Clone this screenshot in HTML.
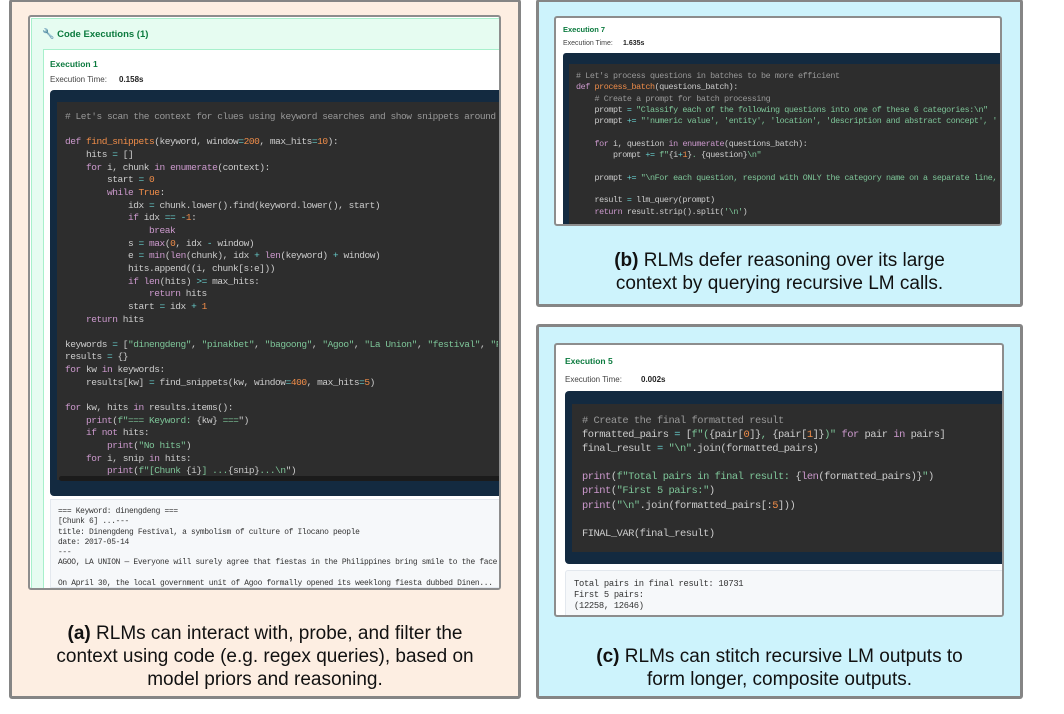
<!DOCTYPE html>
<html><head><meta charset="utf-8"><style>
*{margin:0;padding:0;box-sizing:border-box}
body{width:1064px;height:714px;background:#fff;position:relative;overflow:hidden;font-family:"Liberation Sans",sans-serif}
.abs{position:absolute}
.panel{position:absolute;border:3px solid #858585;border-radius:3px}
pre{position:absolute;font-family:"Liberation Mono",monospace;color:#cccccc;white-space:pre;overflow:hidden}
.c{color:#999}.k{color:#cc99cd}.f{color:#f08d49}.n{color:#f08d49}.s{color:#7ec699}.o{color:#67cdcc}
.cap{position:absolute;text-align:center;font-size:19px;line-height:23px;color:#111}
.g{color:#0b7a3e;font-weight:bold}
.lbl{color:#444}
.val{color:#222;font-weight:bold}
</style></head><body>

<!-- Panel A -->
<div class="panel" style="left:9px;top:-1px;width:512px;height:700px;background:#fdeee2"></div>
<div class="abs" style="left:28px;top:15px;width:473px;height:575px;border:2px solid #8d8d8d;border-radius:3px;background:#fff;overflow:hidden">
  <div class="abs" style="left:1px;top:1px;width:480px;height:580px;background:#e6fcf1;border:1px solid #a8f0cc"></div>
  <div class="abs" style="left:12px;top:12px;font-size:9.5px"><span style="font-size:10px">🔧</span> <span class="g">Code Executions (1)</span></div>
  <div class="abs" style="left:13px;top:32px;width:470px;height:560px;background:#fff;border:1px solid #a8f0cc;border-right:none"></div>
  <div class="abs g" style="left:20px;top:42px;font-size:8.5px">Execution 1</div>
  <div class="abs lbl" style="left:20px;top:58px;font-size:8px">Execution Time:</div>
  <div class="abs val" style="left:89px;top:58px;font-size:8px">0.158s</div>
  <div class="abs" style="left:20px;top:73px;width:460px;height:406px;background:#132a40;border-radius:4px"></div>
  <div class="abs" style="left:27px;top:85px;width:460px;height:378px;background:#2d2d2d"></div>
  <div class="abs" style="left:29px;top:459px;width:460px;height:5px;background:#1b1b1b;border-radius:3px"></div>
</div>
<pre style="left:65px;top:111px;width:433px;height:364px;font-size:9.5px;line-height:12.65px;letter-spacing:-0.45px"><span class="c"># Let's scan the context for clues using keyword searches and show snippets around</span>

<span class="k">def</span> <span class="f">find_snippets</span>(keyword, window<span class="o">=</span><span class="n">200</span>, max_hits<span class="o">=</span><span class="n">10</span>):
    hits <span class="o">=</span> []
    <span class="k">for</span> i, chunk <span class="k">in</span> <span class="k">enumerate</span>(context):
        start <span class="o">=</span> <span class="n">0</span>
        <span class="k">while</span> <span class="n">True</span>:
            idx <span class="o">=</span> chunk.lower().find(keyword.lower(), start)
            <span class="k">if</span> idx <span class="o">==</span> <span class="o">-</span><span class="n">1</span>:
                <span class="k">break</span>
            s <span class="o">=</span> <span class="k">max</span>(<span class="n">0</span>, idx <span class="o">-</span> window)
            e <span class="o">=</span> <span class="k">min</span>(<span class="k">len</span>(chunk), idx <span class="o">+</span> <span class="k">len</span>(keyword) <span class="o">+</span> window)
            hits.append((i, chunk[s:e]))
            <span class="k">if</span> <span class="k">len</span>(hits) <span class="o">&gt;=</span> max_hits:
                <span class="k">return</span> hits
            start <span class="o">=</span> idx <span class="o">+</span> <span class="n">1</span>
    <span class="k">return</span> hits

keywords <span class="o">=</span> [<span class="s">"dinengdeng"</span>, <span class="s">"pinakbet"</span>, <span class="s">"bagoong"</span>, <span class="s">"Agoo"</span>, <span class="s">"La Union"</span>, <span class="s">"festival"</span>, <span class="s">"F</span>
results <span class="o">=</span> {}
<span class="k">for</span> kw <span class="k">in</span> keywords:
    results[kw] <span class="o">=</span> find_snippets(kw, window<span class="o">=</span><span class="n">400</span>, max_hits<span class="o">=</span><span class="n">5</span>)

<span class="k">for</span> kw, hits <span class="k">in</span> results.items():
    <span class="k">print</span>(<span class="s">f"=== Keyword: </span>{kw}<span class="s"> ===</span>")
    <span class="k">if</span> <span class="k">not</span> hits:
        <span class="k">print</span>(<span class="s">"No hits"</span>)
    <span class="k">for</span> i, snip <span class="k">in</span> hits:
        <span class="k">print</span>(<span class="s">f"[Chunk </span>{i}<span class="s">] ...</span>{snip}<span class="s">...\n</span>")</pre>
<div class="abs" style="left:50px;top:499px;width:449px;height:89px;background:#f6f8fa;border:1px solid #e3e8ee;border-right:none"></div>
<pre style="left:58px;top:507px;width:440px;height:81px;font-size:7.9px;line-height:10.3px;letter-spacing:-0.3px;color:#333">=== Keyword: dinengdeng ===
[Chunk 6] ...---
title: Dinengdeng Festival, a symbolism of culture of Ilocano people
date: 2017-05-14
---
AGOO, LA UNION — Everyone will surely agree that fiestas in the Philippines bring smile to the face

On April 30, the local government unit of Agoo formally opened its weeklong fiesta dubbed Dinen...</pre>
<div class="cap" style="left:10px;width:510px;top:622px"><b>(a)</b> RLMs can interact with, probe, and filter the<br>context using code (e.g. regex queries), based on<br>model priors and reasoning.</div>

<!-- Panel B -->
<div class="panel" style="left:536px;top:-1px;width:487px;height:308px;background:#cdf3fc"></div>
<div class="abs" style="left:554px;top:16px;width:448px;height:210px;border:2px solid #8d8d8d;border-radius:3px;background:#fff;overflow:hidden">
  <div class="abs g" style="left:7px;top:7px;font-size:7.5px">Execution 7</div>
  <div class="abs lbl" style="left:7px;top:22px;font-size:7px">Execution Time:</div>
  <div class="abs val" style="left:67px;top:22px;font-size:7px">1.635s</div>
  <div class="abs" style="left:7px;top:35px;width:450px;height:180px;background:#132a40;border-radius:3px"></div>
  <div class="abs" style="left:13px;top:46px;width:450px;height:170px;background:#2d2d2d"></div>
</div>
<pre style="left:576px;top:71px;width:424px;height:152px;font-size:8.4px;line-height:11.3px;letter-spacing:-0.4px"><span class="c"># Let's process questions in batches to be more efficient</span>
<span class="k">def</span> <span class="f">process_batch</span>(questions_batch):
    <span class="c"># Create a prompt for batch processing</span>
    prompt <span class="o">=</span> <span class="s">"Classify each of the following questions into one of these 6 categories:\n"</span>
    prompt <span class="o">+=</span> <span class="s">"'numeric value', 'entity', 'location', 'description and abstract concept', '</span>

    <span class="k">for</span> i, question <span class="k">in</span> <span class="k">enumerate</span>(questions_batch):
        prompt <span class="o">+=</span> <span class="s">f"</span>{i<span class="o">+</span><span class="n">1</span>}<span class="s">. </span>{question}<span class="s">\n"</span>

    prompt <span class="o">+=</span> <span class="s">"\nFor each question, respond with ONLY the category name on a separate line,</span>

    result <span class="o">=</span> llm_query(prompt)
    <span class="k">return</span> result.strip().split(<span class="s">'\n'</span>)</pre>
<div class="cap" style="left:537px;width:485px;top:249px"><b>(b)</b> RLMs defer reasoning over its large<br>context by querying recursive LM calls.</div>

<!-- Panel C -->
<div class="panel" style="left:536px;top:324px;width:487px;height:375px;background:#cdf3fc"></div>
<div class="abs" style="left:554px;top:343px;width:450px;height:274px;border:2px solid #8d8d8d;border-radius:3px;background:#fff;overflow:hidden">
  <div class="abs g" style="left:9px;top:11px;font-size:8.5px">Execution 5</div>
  <div class="abs lbl" style="left:9px;top:30px;font-size:8px">Execution Time:</div>
  <div class="abs val" style="left:85px;top:30px;font-size:8px">0.002s</div>
  <div class="abs" style="left:9px;top:46px;width:450px;height:173px;background:#132a40;border-radius:4px"></div>
  <div class="abs" style="left:16px;top:59px;width:450px;height:148px;background:#2d2d2d"></div>
  <div class="abs" style="left:9px;top:225px;width:450px;height:50px;background:#f6f8fa;border:1px solid #e3e8ee;border-radius:3px"></div>
</div>
<pre style="left:582px;top:414px;width:420px;height:135px;font-size:10.4px;line-height:14.1px;letter-spacing:-0.47px"><span class="c"># Create the final formatted result</span>
formatted_pairs <span class="o">=</span> [<span class="s">f"(</span>{pair[<span class="n">0</span>]}<span class="s">, </span>{pair[<span class="n">1</span>]}<span class="s">)"</span> <span class="k">for</span> pair <span class="k">in</span> pairs]
final_result <span class="o">=</span> <span class="s">"\n"</span>.join(formatted_pairs)

<span class="k">print</span>(<span class="s">f"Total pairs in final result: </span>{<span class="k">len</span>(formatted_pairs)}<span class="s">"</span>)
<span class="k">print</span>(<span class="s">"First 5 pairs:"</span>)
<span class="k">print</span>(<span class="s">"\n"</span>.join(formatted_pairs[:<span class="n">5</span>]))

FINAL_VAR(final_result)</pre>
<pre style="left:574px;top:579px;width:420px;height:36px;font-size:8.8px;line-height:11px;letter-spacing:-0.3px;color:#333">Total pairs in final result: 10731
First 5 pairs:
(12258, 12646)</pre>
<div class="cap" style="left:537px;width:485px;top:645px"><b>(c)</b> RLMs can stitch recursive LM outputs to<br>form longer, composite outputs.</div>
</body></html>
